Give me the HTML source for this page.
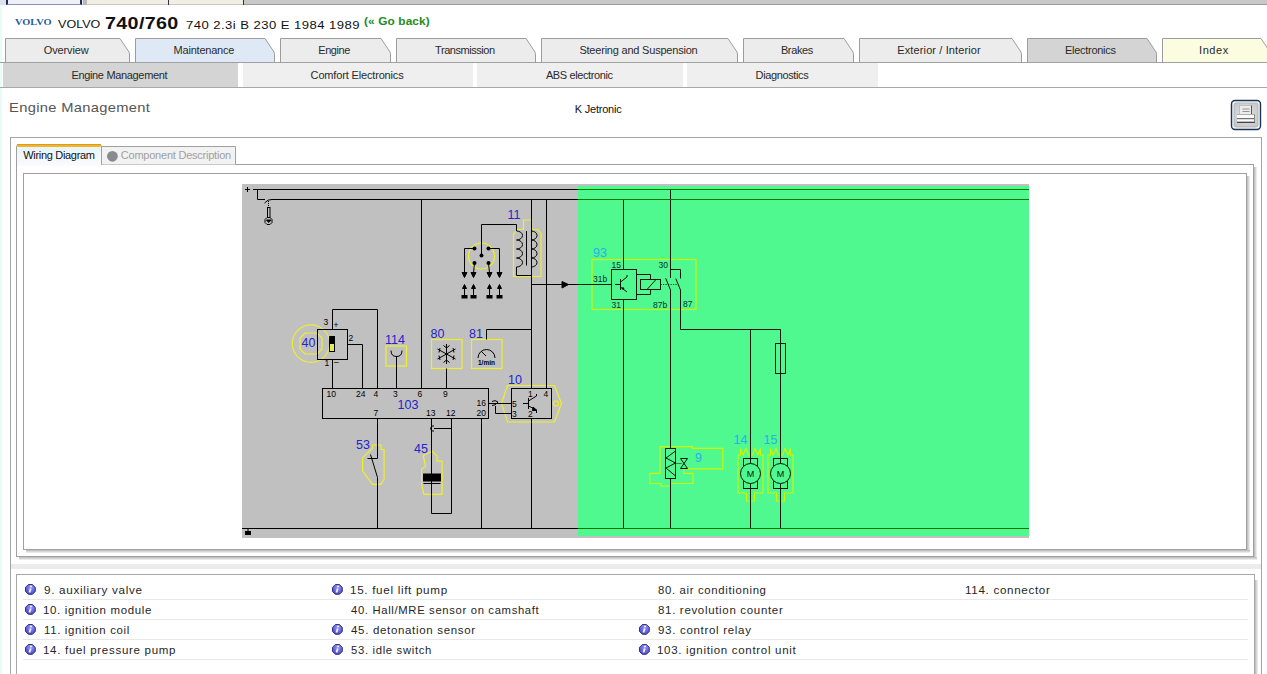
<!DOCTYPE html>
<html><head><meta charset="utf-8">
<style>
html,body{margin:0;padding:0;width:1267px;height:674px;overflow:hidden;background:#fff;font-family:"Liberation Sans",sans-serif;position:relative}
.a{position:absolute;white-space:nowrap;line-height:normal}
svg{position:absolute;overflow:visible}
</style></head><body>
<div class="a" style="left:0;top:0;width:1267px;height:5px;background:#c8c8c8;border-bottom:1px solid #9a9a9a;box-sizing:border-box"></div>
<div class="a" style="left:0;top:0;width:6px;height:5px;background:#dde3ee"></div>
<div class="a" style="left:6px;top:0;width:76px;height:5px;background:#eef0f8;border-left:2px solid #1c2a6a;border-right:2px solid #1c2a6a;border-bottom:1px solid #8890c0;box-sizing:border-box"></div>
<div class="a" style="left:82px;top:0;width:162px;height:5px;background:#f0efe6;border-bottom:1px solid #c8c8c0;box-sizing:border-box"></div>
<div class="a" style="left:83px;top:0;width:4px;height:5px;background:#b8b8b8"></div>
<div class="a" style="left:168px;top:0;width:1px;height:5px;background:#303040"></div>
<div class="a" style="left:243px;top:0;width:1px;height:5px;background:#303040"></div>
<div class="a" style="left:0;top:5px;width:2px;height:669px;background:#e8fbf8"></div>
<svg width="1267" height="90" style="left:0;top:0">
<g stroke="#9c9c9c" stroke-width="1"><path d="M5.5,63 V38.5 H120.0 L129.0,52 Q129.5,53.5 129.5,55 V63" fill="#ececec"/><path d="M135.5,63 V38.5 H265.0 L274.0,52 Q274.5,53.5 274.5,55 V63" fill="#dfe9f5"/><path d="M280.5,63 V38.5 H381.0 L390.0,52 Q390.5,53.5 390.5,55 V63" fill="#ececec"/><path d="M396.5,63 V38.5 H526.0 L535.0,52 Q535.5,53.5 535.5,55 V63" fill="#ececec"/><path d="M541.5,63 V38.5 H728.0 L737.0,52 Q737.5,53.5 737.5,55 V63" fill="#ececec"/><path d="M743.5,63 V38.5 H844.0 L853.0,52 Q853.5,53.5 853.5,55 V63" fill="#ececec"/><path d="M859.5,63 V38.5 H1012.0 L1021.0,52 Q1021.5,53.5 1021.5,55 V63" fill="#ececec"/><path d="M1027.5,63 V38.5 H1147.0 L1156.0,52 Q1156.5,53.5 1156.5,55 V63" fill="#d4d4d4"/><path d="M1162.5,63 V38.5 H1261.0 L1270.0,52 Q1270.5,53.5 1270.5,55 V63" fill="#fcfce0"/></g>
<rect x="0" y="62" width="1267" height="1" fill="#a0a0a0"/>
<rect x="3" y="63" width="235" height="24" fill="#d4d4d4"/>
<rect x="243" y="63" width="230" height="24" fill="#efefef"/>
<rect x="477" y="63" width="206" height="24" fill="#efefef"/>
<rect x="687" y="63" width="191" height="24" fill="#efefef"/>
<rect x="0" y="87" width="1267" height="1" fill="#a8a8a8"/>
</svg>
<svg width="1267" height="674" style="left:0;top:0">
<defs>
<linearGradient id="shr" x1="0" x2="1" y1="0" y2="0"><stop offset="0" stop-color="#b8b8b8"/><stop offset="1" stop-color="#f4f4f4"/></linearGradient>
<linearGradient id="shb" x1="0" x2="0" y1="0" y2="1"><stop offset="0" stop-color="#b8b8b8"/><stop offset="1" stop-color="#f4f4f4"/></linearGradient>
<linearGradient id="wdt" x1="0" x2="0" y1="0" y2="1"><stop offset="0" stop-color="#e4f4fc"/><stop offset="1" stop-color="#fafafa"/></linearGradient>
</defs>
<rect x="10.5" y="137.5" width="1251" height="560" fill="none" stroke="#a4a4a4"/>
<!-- tab content box -->
<rect x="1254" y="167" width="3" height="392" fill="url(#shr)"/>
<rect x="19" y="557" width="1238" height="3" fill="url(#shb)"/>
<rect x="16.5" y="164.5" width="1237" height="392" fill="#fff" stroke="#a0a0a0"/>
<!-- wiring tab -->
<path d="M16.5,165 V147 Q16.5,144.5 19,144.5 H99 Q101.5,144.5 101.5,147 V165" fill="url(#wdt)" stroke="#a0a0a0"/>
<rect x="17" y="144" width="84" height="3" rx="1.5" fill="#f0b828"/>
<rect x="17" y="144" width="84" height="1" fill="#e09820"/>
<rect x="17" y="164" width="84" height="1.5" fill="#fafafa"/>
<path d="M101.5,164.5 V146.5 H235.5 V164.5" fill="#f2f2f2" stroke="#a0a0a0"/>
<circle cx="112.4" cy="156.3" r="5.4" fill="#8a8890"/>
<!-- inner box -->
<rect x="1247" y="176" width="3" height="376" fill="url(#shr)"/>
<rect x="26" y="550" width="1224" height="3" fill="url(#shb)"/>
<rect x="23.5" y="173.5" width="1223" height="376" fill="#fff" stroke="#a0a0a0"/>
<!-- separator -->
<rect x="11" y="564" width="1250" height="5" fill="#ececec"/>
<!-- legend box -->
<rect x="1255" y="580" width="3" height="100" fill="url(#shr)"/>
<rect x="16.5" y="574.5" width="1238" height="120" fill="#fff" stroke="#a8a8a8"/>
<g fill="#e8e8e8">
<rect x="23" y="599" width="1225" height="1"/>
<rect x="23" y="619" width="1225" height="1"/>
<rect x="23" y="639" width="1225" height="1"/>
<rect x="23" y="659" width="1225" height="1"/>
</g>
</svg>
<svg width="1267" height="674" style="left:0;top:0">
<defs>
<clipPath id="cg"><rect x="0" y="0" width="578" height="674"/></clipPath>
<clipPath id="cr"><rect x="578" y="0" width="700" height="674"/></clipPath>
</defs>
<rect x="242" y="184" width="787" height="354" fill="#c0c0c0"/>
<rect x="578" y="186" width="451" height="350" fill="#50f890"/>
<g fill="none" stroke="#eeee30" stroke-width="1.2" clip-path="url(#cg)"><path d="M513.5,276.5 L513.5,234 L517.5,229.5 L523.5,229.5 L523.5,220 L531.5,220 L531.5,229.5 L538,229.5 L541,234 L541,276.5 Z" />
<circle cx="481.5" cy="256" r="13"/>
<circle cx="311" cy="343.6" r="18.7"/>
<path d="M305,333 L317,333 L322,338 L322,349 L317,354 L305,354 L300,349 L300,338 Z"/>
<rect x="386" y="346" width="20.5" height="20"/>
<rect x="431.5" y="339.5" width="30.5" height="29"/>
<rect x="471.5" y="339.5" width="30.5" height="29"/>
<path d="M501.5,403.5 L507.5,385.5 L554.5,385.5 L561.5,403.5 L554.5,422 L507.5,422 Z" />
<circle cx="556" cy="403.5" r="2.5"/>
<path d="M362.6,457.8 L372.5,447.9 L372.5,445 L381,445 L381,449.5 L384.1,449.5 L384.1,479.4 L380.8,484.4 L372.5,484.4 L362.6,471.1 Z" />
<path d="M423.2,455.5 L432.2,451.2 L437,456 L437,461.2 L442.1,461.2 L442.1,494.3 L423.9,494.3 L421.6,484.4 L421.6,469.4 L425.6,466.1 Z" />
<rect x="592" y="259.5" width="104" height="50"/>
<path d="M660,446.6 L692.5,446.6 L692.5,448.4 L722.8,448.4 L722.8,468.8 L683.6,468.8 L683.6,473.3 L693,473.3 L693,483.5 L670.5,483.5 L670.5,486 L661,486 L661,483.5 L649.8,483.5 L649.8,473.3 L660,473.3 Z" />
<path d="M738.0,493 L738.0,455 L740.5,455 L740.5,448.5 L743.0,455 L746.0,448.5 L748.5,455 L752.5,455 L755.0,448.5 L758.0,455 L760.5,448.5 L760.5,455 L763.0,455 L763.0,493 L754.5,493 L754.5,501 L746.5,501 L746.5,493 Z" />
<path d="M768.0,493 L768.0,455 L770.5,455 L770.5,448.5 L773.0,455 L776.0,448.5 L778.5,455 L782.5,455 L785.0,448.5 L788.0,455 L790.5,448.5 L790.5,455 L793.0,455 L793.0,493 L784.5,493 L784.5,501 L776.5,501 L776.5,493 Z" /></g>
<g fill="none" stroke="#d0f400" stroke-width="1.15" clip-path="url(#cr)"><path d="M513.5,276.5 L513.5,234 L517.5,229.5 L523.5,229.5 L523.5,220 L531.5,220 L531.5,229.5 L538,229.5 L541,234 L541,276.5 Z" />
<circle cx="481.5" cy="256" r="13"/>
<circle cx="311" cy="343.6" r="18.7"/>
<path d="M305,333 L317,333 L322,338 L322,349 L317,354 L305,354 L300,349 L300,338 Z"/>
<rect x="386" y="346" width="20.5" height="20"/>
<rect x="431.5" y="339.5" width="30.5" height="29"/>
<rect x="471.5" y="339.5" width="30.5" height="29"/>
<path d="M501.5,403.5 L507.5,385.5 L554.5,385.5 L561.5,403.5 L554.5,422 L507.5,422 Z" />
<circle cx="556" cy="403.5" r="2.5"/>
<path d="M362.6,457.8 L372.5,447.9 L372.5,445 L381,445 L381,449.5 L384.1,449.5 L384.1,479.4 L380.8,484.4 L372.5,484.4 L362.6,471.1 Z" />
<path d="M423.2,455.5 L432.2,451.2 L437,456 L437,461.2 L442.1,461.2 L442.1,494.3 L423.9,494.3 L421.6,484.4 L421.6,469.4 L425.6,466.1 Z" />
<rect x="592" y="259.5" width="104" height="50"/>
<path d="M660,446.6 L692.5,446.6 L692.5,448.4 L722.8,448.4 L722.8,468.8 L683.6,468.8 L683.6,473.3 L693,473.3 L693,483.5 L670.5,483.5 L670.5,486 L661,486 L661,483.5 L649.8,483.5 L649.8,473.3 L660,473.3 Z" />
<path d="M738.0,493 L738.0,455 L740.5,455 L740.5,448.5 L743.0,455 L746.0,448.5 L748.5,455 L752.5,455 L755.0,448.5 L758.0,455 L760.5,448.5 L760.5,455 L763.0,455 L763.0,493 L754.5,493 L754.5,501 L746.5,501 L746.5,493 Z" />
<path d="M768.0,493 L768.0,455 L770.5,455 L770.5,448.5 L773.0,455 L776.0,448.5 L778.5,455 L782.5,455 L785.0,448.5 L788.0,455 L790.5,448.5 L790.5,455 L793.0,455 L793.0,493 L784.5,493 L784.5,501 L776.5,501 L776.5,493 Z" /></g>
<g fill="none" stroke="#000" color="#000" stroke-width="1" clip-path="url(#cg)"><path d="M253,189.5 L1029,189.5"/>
<path d="M257.5,189.5 L257.5,199.5 L265,199.5"/>
<path d="M271,199.5 L1029,199.5"/>
<path d="M264.5,203 Q268,199 272,199.5"/>
<path d="M247.5,187 V192 M245,189.5 H250"/>
<path d="M268.5,201 V207" stroke-dasharray="1,1"/>
<rect x="267.5" y="207.5" width="2.5" height="10"/>
<path d="M267,217.5 L265,219.5 V222.5 L267,224.5 H270 L272,222.5 V219.5 L270,217.5"/>
<path d="M266.5,220 H271 L268.7,222.5 Z" fill="currentColor"/>
<path d="M242,528.5 L1029,528.5"/>
<rect x="245" y="531" width="6" height="4" fill="currentColor" stroke="none"/><path d="M248,528.5 V531"/>
<path d="M421.5,199.5 L421.5,388.5"/>
<path d="M531.5,199.5 L531.5,388.5"/>
<path d="M546.5,199.5 L546.5,388.5"/>
<path d="M531.5,418.5 L531.5,528.5"/>
<path d="M623.5,199.5 L623.5,269.5"/>
<path d="M623.5,299 L623.5,528.5"/>
<path d="M670.5,189.5 L670.5,278"/>
<path d="M670.5,290 L670.5,448.5"/>
<path d="M670.5,478.5 L670.5,528.5"/>
<path d="M670.5,269.5 L680.5,269.5 L680.5,278.5"/>
<path d="M680.5,290 L680.5,329.5 L780.5,329.5 L780.5,528.5"/>
<path d="M750.5,329.5 L750.5,528.5"/>
<path d="M665.7,278.2 L670.5,290"/>
<path d="M675.8,278.6 L680.5,290"/>
<path d="M660.6,284.5 H677" stroke-dasharray="1,1.5"/>
<rect x="611.5" y="269.5" width="25.0" height="30.0"/>
<path d="M531.5,284.5 L611.5,284.5"/>
<path d="M562,281.5 L568.5,284.5 L562,288 Z" fill="currentColor"/>
<path d="M615,284.5 L620.5,284.5"/>
<path d="M620.5,279 L620.5,290"/>
<path d="M620.5,282 L627,277 L627,275"/>
<path d="M620.5,287 L627,292"/>
<circle cx="623" cy="288.5" r="1.2" fill="currentColor" stroke="none"/>
<path d="M636.5,274.5 L650.5,274.5 L650.5,279.5"/>
<path d="M636.5,294.5 L650.5,294.5 L650.5,289"/>
<rect x="640.5" y="279.5" width="20.0" height="10.0"/>
<path d="M647,289.5 L656,279.5"/>
<rect x="775.5" y="343.5" width="10.0" height="30.0"/>
<rect x="743.5" y="458.5" width="14.0" height="30.0"/>
<circle cx="750.5" cy="473.5" r="10" fill="#50f890"/>
<text x="750.5" y="477" font-size="9" text-anchor="middle" fill="currentColor" stroke="none" font-family="Liberation Sans">M</text>
<rect x="773.5" y="458.5" width="14.0" height="30.0"/>
<circle cx="780.5" cy="473.5" r="10" fill="#50f890"/>
<text x="780.5" y="477" font-size="9" text-anchor="middle" fill="currentColor" stroke="none" font-family="Liberation Sans">M</text>
<rect x="665.5" y="448.5" width="10.0" height="30.0"/>
<path d="M675.5,451 L666,458 L675.5,463 L666,468 L675.5,476"/>
<path d="M675.5,463.5 H682" stroke-dasharray="1,1"/>
<path d="M680.5,458.5 L687.5,458.5 L680.5,468.5 L687.5,468.5 L680.5,458.5"/>
<rect x="322.5" y="388.5" width="166.0" height="30.0"/>
<rect x="317.5" y="329.5" width="30.0" height="30.0"/>
<rect x="329.5" y="343.5" width="5" height="8" fill="#e8e860"/>
<rect x="329.5" y="336.5" width="5.0" height="15.0"/>
<rect x="329.5" y="336.5" width="5" height="7" fill="currentColor"/>
<path d="M332.5,329.5 L332.5,309.5 L377.5,309.5 L377.5,388.5"/>
<path d="M347.5,344.5 L362.5,344.5 L362.5,388.5"/>
<path d="M332.5,359.5 L332.5,388.5"/>
<path d="M396.5,356 L396.5,388.5"/>
<path d="M391,350.5 Q391,356.5 396.5,356.5 Q402,356.5 402,350.5"/>
<path d="M446.5,368.5 L446.5,388.5"/>
<path d="M446.5,344 V364 M437.5,349 L455.5,359 M437.5,359 L455.5,349 M443.5,345.5 L446.5,348 L449.5,345.5 M443.5,362.5 L446.5,360 L449.5,362.5 M439,352.5 L440,348 M454,352.5 L453,348 M439,355.5 L440,360 M454,355.5 L453,360"/>
<path d="M486.5,339.5 L486.5,329.5 L531.5,329.5"/>
<path d="M478,358 A8.5,8.5 0 0 1 495,358"/>
<path d="M481,351 L486,356"/>
<text x="486.5" y="364.5" font-size="6.5" font-weight="bold" text-anchor="middle" fill="currentColor" stroke="none" font-family="Liberation Sans">1/min</text>
<rect x="511.5" y="388.5" width="40.0" height="30.0"/>
<path d="M488.5,403.5 L511.5,403.5"/>
<path d="M495.5,406 L495.5,413.5 L511.5,413.5"/>
<path d="M492,401.5 Q495,399.5 498,402 Q495,406 492,405.5"/>
<path d="M523,403.5 L528.5,403.5"/>
<path d="M528.5,398 L528.5,409"/>
<path d="M528.5,401 L536.5,396 L536.5,394"/>
<path d="M528.5,406 L536.5,410 L536.5,413"/>
<path d="M533,407 L537,410.5 L532.5,410.5 Z" fill="currentColor"/>
<path d="M377.5,418.5 L377.5,458.5 L367.5,458.5"/>
<path d="M370.5,454.5 L377.5,477.5 L377.5,528.5"/>
<path d="M431.5,418.5 L431.5,513.5 L451.5,513.5 L451.5,418.5"/>
<path d="M434,428.5 L451.5,428.5"/>
<path d="M434,426 A2.6,2.6 0 1 0 434,431"/>
<path d="M481.5,418.5 L481.5,528.5"/>
<rect x="423.5" y="474" width="17" height="7" fill="currentColor"/>
<path d="M423.5,483.5 L440.5,483.5"/>
<path d="M481.5,255.5 L481.5,224.5 L516.5,224.5 L516.5,231"/>
<path d="M516.5,231 a6,4.5 0 0 1 0,9 a6,4.5 0 0 1 0,9 a6,4.5 0 0 1 0,9 a6,4.5 0 0 1 0,9"/>
<path d="M516.5,267 L516.5,275.5 L531.5,275.5"/>
<path d="M531.5,231 a5.5,4.5 0 0 1 0,9 a5.5,4.5 0 0 1 0,9 a5.5,4.5 0 0 1 0,9 a5.5,4.5 0 0 1 0,9"/>
<path d="M526.5,231 L526.5,265.5"/>
<circle cx="474.5" cy="248.5" r="2" fill="currentColor" stroke="none"/>
<circle cx="488.5" cy="248.5" r="2" fill="currentColor" stroke="none"/>
<circle cx="481.5" cy="255.5" r="2" fill="currentColor" stroke="none"/>
<circle cx="474.5" cy="263" r="2" fill="currentColor" stroke="none"/>
<circle cx="488.5" cy="263" r="2" fill="currentColor" stroke="none"/>
<path d="M474.5,248.5 L464.5,248.5 L464.5,273"/>
<path d="M488.5,248.5 L499.5,248.5 L499.5,273"/>
<path d="M474.5,263 L473.5,273"/>
<path d="M488.5,263 L489.5,273"/>
<path d="M462.0,272.5 H467.0 L464.5,277.5 Z" fill="currentColor"/>
<path d="M462.5,288.5 H466.5 L464.5,284.5 Z" fill="currentColor"/>
<path d="M464.5,287 L464.5,296"/>
<rect x="461.5" y="295" width="6" height="3.5" fill="currentColor" stroke="none"/>
<path d="M471.0,272.5 H476.0 L473.5,277.5 Z" fill="currentColor"/>
<path d="M471.5,288.5 H475.5 L473.5,284.5 Z" fill="currentColor"/>
<path d="M473.5,287 L473.5,296"/>
<rect x="470.5" y="295" width="6" height="3.5" fill="currentColor" stroke="none"/>
<path d="M487.0,272.5 H492.0 L489.5,277.5 Z" fill="currentColor"/>
<path d="M487.5,288.5 H491.5 L489.5,284.5 Z" fill="currentColor"/>
<path d="M489.5,287 L489.5,296"/>
<rect x="486.5" y="295" width="6" height="3.5" fill="currentColor" stroke="none"/>
<path d="M497.0,272.5 H502.0 L499.5,277.5 Z" fill="currentColor"/>
<path d="M497.5,288.5 H501.5 L499.5,284.5 Z" fill="currentColor"/>
<path d="M499.5,287 L499.5,296"/>
<rect x="496.5" y="295" width="6" height="3.5" fill="currentColor" stroke="none"/></g>
<g fill="none" stroke="#061806" color="#061806" stroke-width="1" clip-path="url(#cr)"><path d="M253,189.5 L1029,189.5"/>
<path d="M257.5,189.5 L257.5,199.5 L265,199.5"/>
<path d="M271,199.5 L1029,199.5"/>
<path d="M264.5,203 Q268,199 272,199.5"/>
<path d="M247.5,187 V192 M245,189.5 H250"/>
<path d="M268.5,201 V207" stroke-dasharray="1,1"/>
<rect x="267.5" y="207.5" width="2.5" height="10"/>
<path d="M267,217.5 L265,219.5 V222.5 L267,224.5 H270 L272,222.5 V219.5 L270,217.5"/>
<path d="M266.5,220 H271 L268.7,222.5 Z" fill="currentColor"/>
<path d="M242,528.5 L1029,528.5"/>
<rect x="245" y="531" width="6" height="4" fill="currentColor" stroke="none"/><path d="M248,528.5 V531"/>
<path d="M421.5,199.5 L421.5,388.5"/>
<path d="M531.5,199.5 L531.5,388.5"/>
<path d="M546.5,199.5 L546.5,388.5"/>
<path d="M531.5,418.5 L531.5,528.5"/>
<path d="M623.5,199.5 L623.5,269.5"/>
<path d="M623.5,299 L623.5,528.5"/>
<path d="M670.5,189.5 L670.5,278"/>
<path d="M670.5,290 L670.5,448.5"/>
<path d="M670.5,478.5 L670.5,528.5"/>
<path d="M670.5,269.5 L680.5,269.5 L680.5,278.5"/>
<path d="M680.5,290 L680.5,329.5 L780.5,329.5 L780.5,528.5"/>
<path d="M750.5,329.5 L750.5,528.5"/>
<path d="M665.7,278.2 L670.5,290"/>
<path d="M675.8,278.6 L680.5,290"/>
<path d="M660.6,284.5 H677" stroke-dasharray="1,1.5"/>
<rect x="611.5" y="269.5" width="25.0" height="30.0"/>
<path d="M531.5,284.5 L611.5,284.5"/>
<path d="M562,281.5 L568.5,284.5 L562,288 Z" fill="currentColor"/>
<path d="M615,284.5 L620.5,284.5"/>
<path d="M620.5,279 L620.5,290"/>
<path d="M620.5,282 L627,277 L627,275"/>
<path d="M620.5,287 L627,292"/>
<circle cx="623" cy="288.5" r="1.2" fill="currentColor" stroke="none"/>
<path d="M636.5,274.5 L650.5,274.5 L650.5,279.5"/>
<path d="M636.5,294.5 L650.5,294.5 L650.5,289"/>
<rect x="640.5" y="279.5" width="20.0" height="10.0"/>
<path d="M647,289.5 L656,279.5"/>
<rect x="775.5" y="343.5" width="10.0" height="30.0"/>
<rect x="743.5" y="458.5" width="14.0" height="30.0"/>
<circle cx="750.5" cy="473.5" r="10" fill="#50f890"/>
<text x="750.5" y="477" font-size="9" text-anchor="middle" fill="currentColor" stroke="none" font-family="Liberation Sans">M</text>
<rect x="773.5" y="458.5" width="14.0" height="30.0"/>
<circle cx="780.5" cy="473.5" r="10" fill="#50f890"/>
<text x="780.5" y="477" font-size="9" text-anchor="middle" fill="currentColor" stroke="none" font-family="Liberation Sans">M</text>
<rect x="665.5" y="448.5" width="10.0" height="30.0"/>
<path d="M675.5,451 L666,458 L675.5,463 L666,468 L675.5,476"/>
<path d="M675.5,463.5 H682" stroke-dasharray="1,1"/>
<path d="M680.5,458.5 L687.5,458.5 L680.5,468.5 L687.5,468.5 L680.5,458.5"/>
<rect x="322.5" y="388.5" width="166.0" height="30.0"/>
<rect x="317.5" y="329.5" width="30.0" height="30.0"/>
<rect x="329.5" y="343.5" width="5" height="8" fill="#e8e860"/>
<rect x="329.5" y="336.5" width="5.0" height="15.0"/>
<rect x="329.5" y="336.5" width="5" height="7" fill="currentColor"/>
<path d="M332.5,329.5 L332.5,309.5 L377.5,309.5 L377.5,388.5"/>
<path d="M347.5,344.5 L362.5,344.5 L362.5,388.5"/>
<path d="M332.5,359.5 L332.5,388.5"/>
<path d="M396.5,356 L396.5,388.5"/>
<path d="M391,350.5 Q391,356.5 396.5,356.5 Q402,356.5 402,350.5"/>
<path d="M446.5,368.5 L446.5,388.5"/>
<path d="M446.5,344 V364 M437.5,349 L455.5,359 M437.5,359 L455.5,349 M443.5,345.5 L446.5,348 L449.5,345.5 M443.5,362.5 L446.5,360 L449.5,362.5 M439,352.5 L440,348 M454,352.5 L453,348 M439,355.5 L440,360 M454,355.5 L453,360"/>
<path d="M486.5,339.5 L486.5,329.5 L531.5,329.5"/>
<path d="M478,358 A8.5,8.5 0 0 1 495,358"/>
<path d="M481,351 L486,356"/>
<text x="486.5" y="364.5" font-size="6.5" font-weight="bold" text-anchor="middle" fill="currentColor" stroke="none" font-family="Liberation Sans">1/min</text>
<rect x="511.5" y="388.5" width="40.0" height="30.0"/>
<path d="M488.5,403.5 L511.5,403.5"/>
<path d="M495.5,406 L495.5,413.5 L511.5,413.5"/>
<path d="M492,401.5 Q495,399.5 498,402 Q495,406 492,405.5"/>
<path d="M523,403.5 L528.5,403.5"/>
<path d="M528.5,398 L528.5,409"/>
<path d="M528.5,401 L536.5,396 L536.5,394"/>
<path d="M528.5,406 L536.5,410 L536.5,413"/>
<path d="M533,407 L537,410.5 L532.5,410.5 Z" fill="currentColor"/>
<path d="M377.5,418.5 L377.5,458.5 L367.5,458.5"/>
<path d="M370.5,454.5 L377.5,477.5 L377.5,528.5"/>
<path d="M431.5,418.5 L431.5,513.5 L451.5,513.5 L451.5,418.5"/>
<path d="M434,428.5 L451.5,428.5"/>
<path d="M434,426 A2.6,2.6 0 1 0 434,431"/>
<path d="M481.5,418.5 L481.5,528.5"/>
<rect x="423.5" y="474" width="17" height="7" fill="currentColor"/>
<path d="M423.5,483.5 L440.5,483.5"/>
<path d="M481.5,255.5 L481.5,224.5 L516.5,224.5 L516.5,231"/>
<path d="M516.5,231 a6,4.5 0 0 1 0,9 a6,4.5 0 0 1 0,9 a6,4.5 0 0 1 0,9 a6,4.5 0 0 1 0,9"/>
<path d="M516.5,267 L516.5,275.5 L531.5,275.5"/>
<path d="M531.5,231 a5.5,4.5 0 0 1 0,9 a5.5,4.5 0 0 1 0,9 a5.5,4.5 0 0 1 0,9 a5.5,4.5 0 0 1 0,9"/>
<path d="M526.5,231 L526.5,265.5"/>
<circle cx="474.5" cy="248.5" r="2" fill="currentColor" stroke="none"/>
<circle cx="488.5" cy="248.5" r="2" fill="currentColor" stroke="none"/>
<circle cx="481.5" cy="255.5" r="2" fill="currentColor" stroke="none"/>
<circle cx="474.5" cy="263" r="2" fill="currentColor" stroke="none"/>
<circle cx="488.5" cy="263" r="2" fill="currentColor" stroke="none"/>
<path d="M474.5,248.5 L464.5,248.5 L464.5,273"/>
<path d="M488.5,248.5 L499.5,248.5 L499.5,273"/>
<path d="M474.5,263 L473.5,273"/>
<path d="M488.5,263 L489.5,273"/>
<path d="M462.0,272.5 H467.0 L464.5,277.5 Z" fill="currentColor"/>
<path d="M462.5,288.5 H466.5 L464.5,284.5 Z" fill="currentColor"/>
<path d="M464.5,287 L464.5,296"/>
<rect x="461.5" y="295" width="6" height="3.5" fill="currentColor" stroke="none"/>
<path d="M471.0,272.5 H476.0 L473.5,277.5 Z" fill="currentColor"/>
<path d="M471.5,288.5 H475.5 L473.5,284.5 Z" fill="currentColor"/>
<path d="M473.5,287 L473.5,296"/>
<rect x="470.5" y="295" width="6" height="3.5" fill="currentColor" stroke="none"/>
<path d="M487.0,272.5 H492.0 L489.5,277.5 Z" fill="currentColor"/>
<path d="M487.5,288.5 H491.5 L489.5,284.5 Z" fill="currentColor"/>
<path d="M489.5,287 L489.5,296"/>
<rect x="486.5" y="295" width="6" height="3.5" fill="currentColor" stroke="none"/>
<path d="M497.0,272.5 H502.0 L499.5,277.5 Z" fill="currentColor"/>
<path d="M497.5,288.5 H501.5 L499.5,284.5 Z" fill="currentColor"/>
<path d="M499.5,287 L499.5,296"/>
<rect x="496.5" y="295" width="6" height="3.5" fill="currentColor" stroke="none"/></g>
<path d="M578,189.5 H1029 M578,199.5 H1029 M578,528.5 H1029" stroke="#007800" stroke-width="1.2"/>
<g font-family="Liberation Sans" stroke="none" fill="#000" clip-path="url(#cg)"><text x="323.5" y="325" font-size="8.5" text-anchor="start">3</text>
<text x="333.5" y="327.5" font-size="8.5" text-anchor="start">+</text>
<text x="348.5" y="340.5" font-size="8.5" text-anchor="start">2</text>
<text x="324.5" y="366" font-size="8.5" text-anchor="start">1</text>
<text x="334" y="365" font-size="8.5" text-anchor="start">&#8211;</text>
<text x="326.5" y="397" font-size="8.5" text-anchor="start">10</text>
<text x="356" y="397" font-size="8.5" text-anchor="start">24</text>
<text x="373.5" y="397" font-size="8.5" text-anchor="start">4</text>
<text x="393" y="397" font-size="8.5" text-anchor="start">3</text>
<text x="417.5" y="397" font-size="8.5" text-anchor="start">6</text>
<text x="443" y="397" font-size="8.5" text-anchor="start">9</text>
<text x="373.5" y="416" font-size="8.5" text-anchor="start">7</text>
<text x="426" y="416" font-size="8.5" text-anchor="start">13</text>
<text x="446" y="416" font-size="8.5" text-anchor="start">12</text>
<text x="476.5" y="406" font-size="8.5" text-anchor="start">16</text>
<text x="476.5" y="416" font-size="8.5" text-anchor="start">20</text>
<text x="528" y="397" font-size="8.5" text-anchor="start">1</text>
<text x="543.5" y="397" font-size="8.5" text-anchor="start">4</text>
<text x="512" y="407" font-size="8.5" text-anchor="start">5</text>
<text x="512" y="417" font-size="8.5" text-anchor="start">3</text>
<text x="528" y="417" font-size="8.5" text-anchor="start">2</text>
<text x="611.5" y="268" font-size="8.5" text-anchor="start">15</text>
<text x="658.5" y="268" font-size="8.5" text-anchor="start">30</text>
<text x="593" y="282" font-size="8.5" text-anchor="start">31b</text>
<text x="611.5" y="307.5" font-size="8.5" text-anchor="start">31</text>
<text x="653" y="307.5" font-size="8.5" text-anchor="start">87b</text>
<text x="683" y="307" font-size="8.5" text-anchor="start">87</text></g>
<g font-family="Liberation Sans" stroke="none" fill="#033" clip-path="url(#cr)"><text x="323.5" y="325" font-size="8.5" text-anchor="start">3</text>
<text x="333.5" y="327.5" font-size="8.5" text-anchor="start">+</text>
<text x="348.5" y="340.5" font-size="8.5" text-anchor="start">2</text>
<text x="324.5" y="366" font-size="8.5" text-anchor="start">1</text>
<text x="334" y="365" font-size="8.5" text-anchor="start">&#8211;</text>
<text x="326.5" y="397" font-size="8.5" text-anchor="start">10</text>
<text x="356" y="397" font-size="8.5" text-anchor="start">24</text>
<text x="373.5" y="397" font-size="8.5" text-anchor="start">4</text>
<text x="393" y="397" font-size="8.5" text-anchor="start">3</text>
<text x="417.5" y="397" font-size="8.5" text-anchor="start">6</text>
<text x="443" y="397" font-size="8.5" text-anchor="start">9</text>
<text x="373.5" y="416" font-size="8.5" text-anchor="start">7</text>
<text x="426" y="416" font-size="8.5" text-anchor="start">13</text>
<text x="446" y="416" font-size="8.5" text-anchor="start">12</text>
<text x="476.5" y="406" font-size="8.5" text-anchor="start">16</text>
<text x="476.5" y="416" font-size="8.5" text-anchor="start">20</text>
<text x="528" y="397" font-size="8.5" text-anchor="start">1</text>
<text x="543.5" y="397" font-size="8.5" text-anchor="start">4</text>
<text x="512" y="407" font-size="8.5" text-anchor="start">5</text>
<text x="512" y="417" font-size="8.5" text-anchor="start">3</text>
<text x="528" y="417" font-size="8.5" text-anchor="start">2</text>
<text x="611.5" y="268" font-size="8.5" text-anchor="start">15</text>
<text x="658.5" y="268" font-size="8.5" text-anchor="start">30</text>
<text x="593" y="282" font-size="8.5" text-anchor="start">31b</text>
<text x="611.5" y="307.5" font-size="8.5" text-anchor="start">31</text>
<text x="653" y="307.5" font-size="8.5" text-anchor="start">87b</text>
<text x="683" y="307" font-size="8.5" text-anchor="start">87</text></g>
<g font-family="Liberation Sans" fill="#2424c8"><text x="301.5" y="347" font-size="12.5">40</text><text x="385" y="343.5" font-size="12.5">114</text><text x="430.5" y="337.5" font-size="12.5">80</text><text x="469" y="337.5" font-size="12.5">81</text><text x="507.5" y="218.5" font-size="12.5">11</text><text x="508" y="383.5" font-size="12.5">10</text><text x="397.5" y="409" font-size="12.5">103</text><text x="356" y="448.5" font-size="12.5">53</text><text x="414" y="452.5" font-size="12.5">45</text></g>
<g font-family="Liberation Sans" fill="#28b0e8"><text x="593" y="257" font-size="12.5">93</text><text x="695" y="462" font-size="12.5">9</text><text x="733.5" y="444" font-size="12.5">14</text><text x="763.5" y="444" font-size="12.5">15</text></g>
</svg>
<svg width="1267" height="674" style="left:0;top:0">
<defs><radialGradient id="ig" cx="0.55" cy="0.3" r="0.8"><stop offset="0" stop-color="#9898f8"/><stop offset="1" stop-color="#3c3cc0"/></radialGradient></defs>
<polygon points="35.30,591.43 32.43,594.30 28.37,594.30 25.50,591.43 25.50,587.37 28.37,584.50 32.43,584.50 35.30,587.37" fill="url(#ig)" stroke="#262670" stroke-width="0.9"/><path d="M30.7,588.4 L29.5,592.6" stroke="#f0f0ff" stroke-width="1.8"/><circle cx="31.0" cy="586.4" r="0.95" fill="#fff"/><polygon points="35.30,611.43 32.43,614.30 28.37,614.30 25.50,611.43 25.50,607.37 28.37,604.50 32.43,604.50 35.30,607.37" fill="url(#ig)" stroke="#262670" stroke-width="0.9"/><path d="M30.7,608.4 L29.5,612.6" stroke="#f0f0ff" stroke-width="1.8"/><circle cx="31.0" cy="606.4" r="0.95" fill="#fff"/><polygon points="35.30,631.43 32.43,634.30 28.37,634.30 25.50,631.43 25.50,627.37 28.37,624.50 32.43,624.50 35.30,627.37" fill="url(#ig)" stroke="#262670" stroke-width="0.9"/><path d="M30.7,628.4 L29.5,632.6" stroke="#f0f0ff" stroke-width="1.8"/><circle cx="31.0" cy="626.4" r="0.95" fill="#fff"/><polygon points="35.30,651.43 32.43,654.30 28.37,654.30 25.50,651.43 25.50,647.37 28.37,644.50 32.43,644.50 35.30,647.37" fill="url(#ig)" stroke="#262670" stroke-width="0.9"/><path d="M30.7,648.4 L29.5,652.6" stroke="#f0f0ff" stroke-width="1.8"/><circle cx="31.0" cy="646.4" r="0.95" fill="#fff"/><polygon points="342.30,591.43 339.43,594.30 335.37,594.30 332.50,591.43 332.50,587.37 335.37,584.50 339.43,584.50 342.30,587.37" fill="url(#ig)" stroke="#262670" stroke-width="0.9"/><path d="M337.7,588.4 L336.5,592.6" stroke="#f0f0ff" stroke-width="1.8"/><circle cx="338.0" cy="586.4" r="0.95" fill="#fff"/><polygon points="342.30,631.43 339.43,634.30 335.37,634.30 332.50,631.43 332.50,627.37 335.37,624.50 339.43,624.50 342.30,627.37" fill="url(#ig)" stroke="#262670" stroke-width="0.9"/><path d="M337.7,628.4 L336.5,632.6" stroke="#f0f0ff" stroke-width="1.8"/><circle cx="338.0" cy="626.4" r="0.95" fill="#fff"/><polygon points="342.30,651.43 339.43,654.30 335.37,654.30 332.50,651.43 332.50,647.37 335.37,644.50 339.43,644.50 342.30,647.37" fill="url(#ig)" stroke="#262670" stroke-width="0.9"/><path d="M337.7,648.4 L336.5,652.6" stroke="#f0f0ff" stroke-width="1.8"/><circle cx="338.0" cy="646.4" r="0.95" fill="#fff"/><polygon points="649.30,631.43 646.43,634.30 642.37,634.30 639.50,631.43 639.50,627.37 642.37,624.50 646.43,624.50 649.30,627.37" fill="url(#ig)" stroke="#262670" stroke-width="0.9"/><path d="M644.6999999999999,628.4 L643.5,632.6" stroke="#f0f0ff" stroke-width="1.8"/><circle cx="645.0" cy="626.4" r="0.95" fill="#fff"/><polygon points="649.30,651.43 646.43,654.30 642.37,654.30 639.50,651.43 639.50,647.37 642.37,644.50 646.43,644.50 649.30,647.37" fill="url(#ig)" stroke="#262670" stroke-width="0.9"/><path d="M644.6999999999999,648.4 L643.5,652.6" stroke="#f0f0ff" stroke-width="1.8"/><circle cx="645.0" cy="646.4" r="0.95" fill="#fff"/></svg>
<svg width="42" height="40" style="left:1225px;top:95px">
<defs><radialGradient id="pg" cx="0.5" cy="0.45" r="0.7"><stop offset="0" stop-color="#e4e4e4"/><stop offset="1" stop-color="#c4c4c4"/></radialGradient></defs>
<rect x="6.5" y="5.5" width="29" height="29" rx="3.5" fill="#eef4f8" stroke="#1e3450" stroke-width="1.4"/>
<rect x="9" y="8" width="24" height="24" rx="2" fill="url(#pg)" stroke="#a8b4bc" stroke-width="0.8"/>
<rect x="14.5" y="10.5" width="12" height="9" fill="#ececec" stroke="#b8b8b8" stroke-width="0.8"/>
<path d="M26.5,10.5 V19.5" stroke="#555" stroke-width="1"/>
<path d="M17.5,14 H24.5 M17.5,16.5 H24.5" stroke="#8a8a8a" stroke-width="0.9"/>
<rect x="12" y="19.5" width="18" height="8" fill="#fafafa"/>
<path d="M12,19.5 H30" stroke="#b0b0b0" stroke-width="1"/>
<path d="M12,23.7 H30" stroke="#555" stroke-width="1"/>
<path d="M12,27.3 H30" stroke="#333" stroke-width="1.2"/>
<path d="M29.5,19.5 V27.3" stroke="#888" stroke-width="1"/>
</svg>
<div class="a" style="left:14.5px;top:17.0px;font-family:'Liberation Serif';font-size:8.5px;font-weight:bold;color:#1f5aa0;letter-spacing:0.00px;transform:scaleX(1.2169);transform-origin:0 0;">VOLVO</div>
<div class="a" style="left:58.0px;top:18.3px;font-family:'Liberation Sans';font-size:11.5px;font-weight:normal;color:#111;letter-spacing:0.00px;transform:scaleX(1.0924);transform-origin:0 0;">VOLVO</div>
<div class="a" style="left:105.4px;top:13.7px;font-family:'Liberation Sans';font-size:17px;font-weight:bold;color:#111;letter-spacing:0.30px;transform:scaleX(1.1587);transform-origin:0 0;">740/760</div>
<div class="a" style="left:185.7px;top:18.7px;font-family:'Liberation Sans';font-size:11.5px;font-weight:normal;color:#111;letter-spacing:0.40px;transform:scaleX(1.1373);transform-origin:0 0;">740 2.3i B 230 E 1984 1989</div>
<div class="a" style="left:363.7px;top:15.0px;font-family:'Liberation Sans';font-size:10.5px;font-weight:bold;color:#1f8a1f;letter-spacing:0.10px;transform:scaleX(1.1294);transform-origin:0 0;">(« Go back)</div>
<div class="a" style="left:43.7px;top:44.2px;font-family:'Liberation Sans';font-size:11px;font-weight:normal;color:#2a2a2a;letter-spacing:-0.11px;">Overview</div>
<div class="a" style="left:173.6px;top:44.2px;font-family:'Liberation Sans';font-size:11px;font-weight:normal;color:#2a2a2a;letter-spacing:-0.22px;">Maintenance</div>
<div class="a" style="left:318.3px;top:44.2px;font-family:'Liberation Sans';font-size:11px;font-weight:normal;color:#2a2a2a;letter-spacing:-0.44px;">Engine</div>
<div class="a" style="left:435.1px;top:44.2px;font-family:'Liberation Sans';font-size:11px;font-weight:normal;color:#2a2a2a;letter-spacing:-0.45px;">Transmission</div>
<div class="a" style="left:579.4px;top:44.2px;font-family:'Liberation Sans';font-size:11px;font-weight:normal;color:#2a2a2a;letter-spacing:-0.21px;">Steering and Suspension</div>
<div class="a" style="left:780.9px;top:44.2px;font-family:'Liberation Sans';font-size:11px;font-weight:normal;color:#2a2a2a;letter-spacing:-0.36px;">Brakes</div>
<div class="a" style="left:897.3px;top:44.2px;font-family:'Liberation Sans';font-size:11px;font-weight:normal;color:#2a2a2a;letter-spacing:0.12px;">Exterior / Interior</div>
<div class="a" style="left:1065.0px;top:44.2px;font-family:'Liberation Sans';font-size:11px;font-weight:normal;color:#2a2a2a;letter-spacing:-0.28px;">Electronics</div>
<div class="a" style="left:1199.0px;top:44.2px;font-family:'Liberation Sans';font-size:11px;font-weight:normal;color:#2a2a2a;letter-spacing:0.60px;">Index</div>
<div class="a" style="left:71.4px;top:69.2px;font-family:'Liberation Sans';font-size:11px;font-weight:normal;color:#2a2a2a;letter-spacing:-0.33px;">Engine Management</div>
<div class="a" style="left:310.6px;top:69.2px;font-family:'Liberation Sans';font-size:11px;font-weight:normal;color:#2a2a2a;letter-spacing:-0.16px;">Comfort Electronics</div>
<div class="a" style="left:545.9px;top:69.2px;font-family:'Liberation Sans';font-size:11px;font-weight:normal;color:#2a2a2a;letter-spacing:-0.38px;">ABS electronic</div>
<div class="a" style="left:755.6px;top:69.2px;font-family:'Liberation Sans';font-size:11px;font-weight:normal;color:#2a2a2a;letter-spacing:-0.38px;">Diagnostics</div>
<div class="a" style="left:8.8px;top:100.2px;font-family:'Liberation Sans';font-size:13.5px;font-weight:normal;color:#555;letter-spacing:0.30px;transform:scaleX(1.0892);transform-origin:0 0;">Engine Management</div>
<div class="a" style="left:574.8px;top:103.1px;font-family:'Liberation Sans';font-size:11px;font-weight:normal;color:#111;letter-spacing:-0.23px;">K Jetronic</div>
<div class="a" style="left:23.2px;top:148.6px;font-family:'Liberation Sans';font-size:11px;font-weight:normal;color:#111;letter-spacing:-0.31px;">Wiring Diagram</div>
<div class="a" style="left:120.8px;top:149.4px;font-family:'Liberation Sans';font-size:11px;font-weight:normal;color:#a0a0a0;letter-spacing:-0.23px;">Component Description</div>
<div class="a" style="left:44.4px;top:585.4px;font-family:'Liberation Sans';font-size:10.2px;font-weight:normal;color:#262626;letter-spacing:0.60px;transform:scaleX(1.1459);transform-origin:0 0;">9. auxiliary valve</div>
<div class="a" style="left:43.4px;top:605.4px;font-family:'Liberation Sans';font-size:10.2px;font-weight:normal;color:#262626;letter-spacing:0.60px;transform:scaleX(1.1261);transform-origin:0 0;">10. ignition module</div>
<div class="a" style="left:44.4px;top:625.4px;font-family:'Liberation Sans';font-size:10.2px;font-weight:normal;color:#262626;letter-spacing:0.60px;transform:scaleX(1.1184);transform-origin:0 0;">11. ignition coil</div>
<div class="a" style="left:43.4px;top:645.4px;font-family:'Liberation Sans';font-size:10.2px;font-weight:normal;color:#262626;letter-spacing:0.60px;transform:scaleX(1.1342);transform-origin:0 0;">14. fuel pressure pump</div>
<div class="a" style="left:350.0px;top:585.4px;font-family:'Liberation Sans';font-size:10.2px;font-weight:normal;color:#262626;letter-spacing:0.60px;transform:scaleX(1.1437);transform-origin:0 0;">15. fuel lift pump</div>
<div class="a" style="left:351.0px;top:605.4px;font-family:'Liberation Sans';font-size:10.2px;font-weight:normal;color:#262626;letter-spacing:0.60px;transform:scaleX(1.1059);transform-origin:0 0;">40. Hall/MRE sensor on camshaft</div>
<div class="a" style="left:351.0px;top:625.4px;font-family:'Liberation Sans';font-size:10.2px;font-weight:normal;color:#262626;letter-spacing:0.60px;transform:scaleX(1.1282);transform-origin:0 0;">45. detonation sensor</div>
<div class="a" style="left:351.0px;top:645.4px;font-family:'Liberation Sans';font-size:10.2px;font-weight:normal;color:#262626;letter-spacing:0.60px;transform:scaleX(1.1098);transform-origin:0 0;">53. idle switch</div>
<div class="a" style="left:658.4px;top:585.4px;font-family:'Liberation Sans';font-size:10.2px;font-weight:normal;color:#262626;letter-spacing:0.60px;transform:scaleX(1.1134);transform-origin:0 0;">80. air conditioning</div>
<div class="a" style="left:658.4px;top:605.4px;font-family:'Liberation Sans';font-size:10.2px;font-weight:normal;color:#262626;letter-spacing:0.60px;transform:scaleX(1.1279);transform-origin:0 0;">81. revolution counter</div>
<div class="a" style="left:658.4px;top:625.4px;font-family:'Liberation Sans';font-size:10.2px;font-weight:normal;color:#262626;letter-spacing:0.60px;transform:scaleX(1.1317);transform-origin:0 0;">93. control relay</div>
<div class="a" style="left:657.4px;top:645.4px;font-family:'Liberation Sans';font-size:10.2px;font-weight:normal;color:#262626;letter-spacing:0.60px;transform:scaleX(1.1310);transform-origin:0 0;">103. ignition control unit</div>
<div class="a" style="left:964.5px;top:585.4px;font-family:'Liberation Sans';font-size:10.2px;font-weight:normal;color:#262626;letter-spacing:0.60px;transform:scaleX(1.1403);transform-origin:0 0;">114. connector</div>
</body></html>
